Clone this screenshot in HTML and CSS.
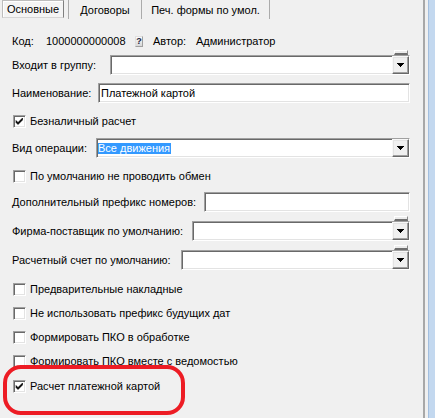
FILE: index.html
```html
<!DOCTYPE html>
<html lang="ru">
<head>
<meta charset="utf-8">
<title>Основные</title>
<link rel="stylesheet" href="styles.css">
</head>
<body>
<div class="window">
  <div class="panel">
    <div class="tabs">
      <div class="tab active">Основные</div>
      <div class="sep sep-first"></div>
      <div class="tab tab-dog">Договоры</div>
      <div class="sep"></div>
      <div class="tab tab-pech">Печ. формы по умол.</div>
      <div class="sep"></div>
    </div>
    <div class="form">
      <div class="row r-kod">
        <span class="lbl-kod">Код:</span>
        <span class="code">1000000000008</span>
        <span class="qbtn">?</span>
        <span class="lbl-author">Автор:</span>
        <span>Администратор</span>
      </div>

      <div class="row r-group">
        <span class="lbl lbl-group">Входит в группу:</span>
        <div class="input">
          <span class="val"></span>
          <span class="ddbtn"><svg width="7" height="4" viewBox="0 0 7 4"><path d="M0 0h7v1h-1v1h-1v1h-1v1h-1v-1h-1v-1h-1v-1h-1z" fill="#000"/></svg></span>
          <span class="mini"></span>
        </div>
      </div>

      <div class="row r-name">
        <span class="lbl lbl-name">Наименование:</span>
        <div class="input"><span class="val">Платежной картой</span></div>
      </div>

      <div class="row cb r-cb1">
        <span class="box"><svg width="11" height="11" viewBox="0 0 11 11"><path d="M2 4.5l2 2 4.5-4.5v2l-4.5 4.5-2-2z" fill="#000" stroke="#000" stroke-width="0.6"/></svg></span>
        <span>Безналичный расчет</span>
      </div>

      <div class="row r-vid">
        <span class="lbl lbl-vid">Вид операции:</span>
        <div class="input">
          <span class="val val-flush"><span class="sel">Все движения</span></span>
          <span class="ddbtn"><svg width="7" height="4" viewBox="0 0 7 4"><path d="M0 0h7v1h-1v1h-1v1h-1v1h-1v-1h-1v-1h-1v-1h-1z" fill="#000"/></svg></span>
        </div>
      </div>

      <div class="row cb r-cb2">
        <span class="box"></span>
        <span>По умолчанию не проводить обмен</span>
      </div>

      <div class="row r-dop">
        <span class="lbl lbl-dop">Дополнительный префикс номеров:</span>
        <div class="input"><span class="val"></span></div>
      </div>

      <div class="row r-firma">
        <span class="lbl lbl-firma">Фирма-поставщик по умолчанию:</span>
        <div class="input">
          <span class="val"></span>
          <span class="ddbtn"><svg width="7" height="4" viewBox="0 0 7 4"><path d="M0 0h7v1h-1v1h-1v1h-1v1h-1v-1h-1v-1h-1v-1h-1z" fill="#000"/></svg></span>
          <span class="mini"></span>
        </div>
      </div>

      <div class="row r-schet">
        <span class="lbl lbl-schet">Расчетный счет по умолчанию:</span>
        <div class="input">
          <span class="val"></span>
          <span class="ddbtn"><svg width="7" height="4" viewBox="0 0 7 4"><path d="M0 0h7v1h-1v1h-1v1h-1v1h-1v-1h-1v-1h-1v-1h-1z" fill="#000"/></svg></span>
          <span class="mini"></span>
        </div>
      </div>

      <div class="row cb r-cb3">
        <span class="box"></span>
        <span>Предварительные накладные</span>
      </div>
      <div class="row cb r-cb4">
        <span class="box"></span>
        <span>Не использовать префикс будущих дат</span>
      </div>
      <div class="row cb r-cb5">
        <span class="box"></span>
        <span>Формировать ПКО в обработке</span>
      </div>
      <div class="row cb r-cb6">
        <span class="box"></span>
        <span>Формировать ПКО вместе с ведомостью</span>
      </div>
      <div class="row cb r-cb7">
        <span class="box"><svg width="11" height="11" viewBox="0 0 11 11"><path d="M2 4.5l2 2 4.5-4.5v2l-4.5 4.5-2-2z" fill="#000" stroke="#000" stroke-width="0.6"/></svg></span>
        <span>Расчет платежной картой</span>
      </div>
    </div>
  </div>
  <div class="gap"></div>
  <div class="frame"></div>
  <div class="mark"></div>
</div>
</body>
</html>
```

FILE: styles.css
```css
* { box-sizing: border-box; }
html, body { margin: 0; padding: 0; }
body {
  background: #f0f0f0;
  font-family: "Liberation Sans", Arial, sans-serif;
  font-size: 11px;
  color: #000;
  width: 435px;
  height: 418px;
  overflow: hidden;
}
.window { display: flex; height: 418px; position: relative; }
.panel { width: 425px; height: 100%; border-right: 2px solid #a8a8a8; }
.gap { width: 3px; }
.frame { width: 7px; background: #c3d8ef; border-left: 1px solid #a3bfdf; }

/* tabs */
.tabs { display: flex; height: 20px; align-items: flex-start; }
.tab { display: flex; align-items: center; justify-content: center; height: 19px; white-space: nowrap; }
.tab.active {
  margin-left: 2px; width: 62px; height: 18px;
  background: #f4f4f4;
  border: 1px solid #bdbdbd;
  border-right-color: #7f7f7f;
  border-bottom-color: #d6d6d6;
  box-shadow: inset 1px 1px #fff;
}
.sep { width: 1px; height: 19px; background: #ababab; }
.sep-first { margin-left: 4px; }
.tab-dog { width: 72px; }
.tab-pech { width: 127px; }

/* form */
.form { display: flex; flex-direction: column; padding: 0 13px 0 12px; }
.row { display: flex; align-items: center; white-space: nowrap; }

.r-kod { margin-top: 12px; height: 18px; }
.lbl-kod { width: 34px; }
.code { width: 89px; }
.qbtn {
  width: 8px; height: 11px; margin-right: 10px;
  display: flex; align-items: center; justify-content: center;
  font-size: 9px; font-weight: bold; color: #1a1a40; line-height: 9px;
  background: linear-gradient(#fafafa, #d8d8d8);
  border: 1px solid #a0a0a0; border-top-color: #e0e0e0; border-left-color: #e0e0e0;
}
.lbl-author { width: 43px; }

.lbl { flex: none; }
.lbl-group { width: 98px; }
.lbl-name { width: 86px; }
.lbl-vid { width: 84px; }
.lbl-dop { width: 192px; }
.lbl-firma { width: 180px; }
.lbl-schet { width: 169px; }

.input {
  position: relative;
  flex: 1;
  height: 20px;
  display: flex;
  align-items: stretch;
  background: #fff;
  border: 1px solid;
  border-color: #a0a0a0 #fff #fff #a0a0a0;
  box-shadow: inset 1px 1px #696969, inset -1px -1px #e3e3e3;
}
.val { flex: 1; padding-left: 2px; display: flex; align-items: center; }
.val-flush { padding-left: 1px; }
.sel { background: #3399ff; color: #fff; line-height: 11px; height: 11px; display: inline-block; padding-right: 1px; }
.ddbtn {
  width: 17px; flex: none;
  display: flex; align-items: center; justify-content: center;
  background: #f0f0f0;
  border: 1px solid;
  border-color: #f8f8f8 #696969 #696969 #f8f8f8;
  box-shadow: inset -1px -1px #a0a0a0, inset 1px 1px #e3e3e3;
}
.mini {
  position: absolute; top: -6px; right: 1px;
  width: 14px; height: 5px;
  background: #ececec;
  border: 1px solid;
  border-color: #fff #8a8a8a #6f6f6f #fff;
  border-bottom-width: 2px;
}

.r-group { margin-top: 5px; }
.r-name { margin-top: 8px; }
.r-cb1 { margin-top: 9px; }
.r-vid { margin-top: 8px; }
.r-cb2 { margin-top: 9px; }
.r-dop { margin-top: 7px; }
.r-firma { margin-top: 9px; }
.r-schet { margin-top: 9px; }
.r-cb3 { margin-top: 10px; }
.r-cb4 { margin-top: 6px; }
.r-cb5 { margin-top: 6px; }
.r-cb6 { margin-top: 6px; }
.r-cb7 { margin-top: 7px; }

.cb { height: 18px; }
.box {
  width: 13px; height: 13px; flex: none;
  margin-left: 1px; margin-right: 4px;
  background: #fff;
  border: 1px solid;
  border-color: #a0a0a0 #fff #fff #a0a0a0;
  box-shadow: inset 1px 1px #696969, inset -1px -1px #e3e3e3;
  display: flex; align-items: center; justify-content: center;
}
.box svg { display: block; }

/* red annotation */
.mark {
  position: absolute; left: 3px; top: 365px;
  width: 182px; height: 50px;
  border: 4px solid #ed1c24;
  border-radius: 18px;
}
```
